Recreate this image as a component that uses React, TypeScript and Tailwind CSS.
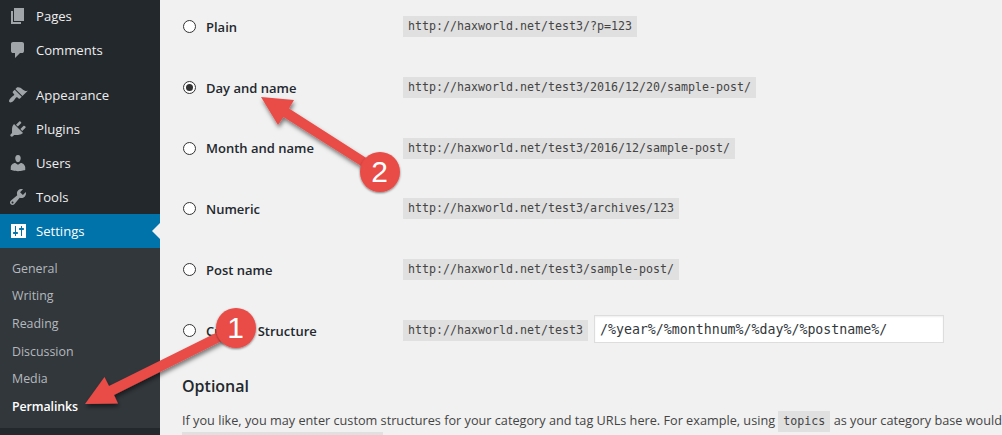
import { clsx } from "clsx";

const ICONS = {
  page: "M6 15V2h10v13H6zm-1 1h8v2H3V5h2v11z",
  comment:
    "M5 2h9q.82 0 1.41.59T16 4v7q0 .82-.59 1.41T14 13h-2l-5 5v-5H5q-.82 0-1.41-.59T3 11V4q0-.82.59-1.41T5 2z",
  brush:
    "M14.48 11.06L7.41 3.99l1.5-1.5c.5-.56 2.3-.47 3.51.32 1.21.8 1.43 1.28 2.91 2.1 1.18.64 2.45 1.26 4.45.85zm-.71.71L6.7 4.7 4.93 6.47c-.39.39-.39 1.02 0 1.41l1.06 1.06c.39.39.39 1.03 0 1.42-.6.6-1.43 1.11-2.21 1.69-.35.26-.7.53-1.01.84C1.43 14.23.4 16.08 1.4 17.07c.99 1 2.84-.03 4.18-1.36.31-.31.58-.66.85-1.02.57-.78 1.08-1.61 1.69-2.21.39-.39 1.02-.39 1.41 0l1.06 1.06c.39.39 1.02.39 1.41 0z",
  plug: "M13.11 4.36L9.87 7.6 8 5.73l3.24-3.24c.35-.34 1.05-.2 1.56.32.52.51.66 1.21.31 1.55zm-8 1.77l.91-1.12 9.01 9.01-1.19.84c-.71.71-2.63 1.16-3.82 1.16H6.14L4.9 17.26c-.59.59-1.54.59-2.12 0-.59-.58-.59-1.53 0-2.12l1.24-1.24v-3.88c0-1.13.4-3.19 1.09-3.89zm7.26 3.97l3.24-3.24c.34-.35 1.04-.21 1.55.31.52.51.66 1.21.31 1.55l-3.24 3.25z",
  user: "M10 9.25c-2.27 0-2.73-3.44-2.73-3.44C7 4.02 7.82 2 9.97 2c2.16 0 2.98 2.02 2.71 3.81 0 0-.41 3.44-2.68 3.44zm0 2.57L12.72 10c2.39 0 4.52 2.33 4.52 4.53v2.49s-3.65 1.13-7.24 1.13c-3.65 0-7.24-1.13-7.24-1.13v-2.49c0-2.25 1.94-4.48 4.47-4.48z",
  wrench:
    "M16.68 9.77c-1.34 1.34-3.3 1.67-4.95.99l-5.41 6.52c-.99.99-2.59.99-3.58 0s-.99-2.59 0-3.57l6.52-5.42c-.68-1.65-.35-3.61.99-4.95 1.28-1.28 3.12-1.62 4.72-1.06l-2.89 2.89 2.82 2.82 2.86-2.87c.53 1.58.18 3.39-1.08 4.65zM3.81 16.21c.4.39 1.04.39 1.43 0 .4-.4.4-1.04 0-1.43-.39-.4-1.03-.4-1.43 0-.39.39-.39 1.03 0 1.43z",
  sliders:
    "M18 17V3H3v14h15zM8 11h1.400q.6 0 .6 1t-.6 1H8v2H7v-2H5.600q-.6 0-.6-1t.6-1H7V5h1v6zm5-2h-1.400q-.6 0-.6-1t.6-1H13V5h1v2h1.400q.6 0 .6 1t-.6 1H14v6h-1V9z",
};

interface MenuItem {
  label: string;
  icon: keyof typeof ICONS;
  active?: boolean;
}

const CONTENT_MENU: MenuItem[] = [
  { label: "Pages", icon: "page" },
  { label: "Comments", icon: "comment" },
];

const ADMIN_MENU: MenuItem[] = [
  { label: "Appearance", icon: "brush" },
  { label: "Plugins", icon: "plug" },
  { label: "Users", icon: "user" },
  { label: "Tools", icon: "wrench" },
  { label: "Settings", icon: "sliders", active: true },
];

const SUBMENU = ["General", "Writing", "Reading", "Discussion", "Media", "Permalinks"];

const BASE = "http://haxworld.net/test3";

const OPTIONS = [
  { label: "Plain", url: `${BASE}/?p=123` },
  { label: "Day and name", url: `${BASE}/2016/12/20/sample-post/` },
  { label: "Month and name", url: `${BASE}/2016/12/sample-post/` },
  { label: "Numeric", url: `${BASE}/archives/123` },
  { label: "Post name", url: `${BASE}/sample-post/` },
  { label: "Custom Structure", url: BASE, custom: true },
];

function MenuRow({ label, icon, active }: MenuItem) {
  return (
    <a
      className={clsx(
        "flex h-[34px] items-center pl-2 text-[13.1px]",
        active ? "bg-[#0073aa] text-white" : "text-[#eee]",
      )}
    >
      <svg
        viewBox="0 0 20 20"
        className={clsx("size-5 shrink-0", active ? "fill-white" : "fill-[#a0a5aa]")}
      >
        <path d={ICONS[icon]} />
      </svg>
      <span className="ml-2 grow pt-0.5">{label}</span>
      {active && (
        <svg viewBox="0 0 8 16" className="h-4 w-2 fill-[#f1f1f1]">
          <path d="M8 0v16L0 8z" />
        </svg>
      )}
    </a>
  );
}

function Sidebar() {
  return (
    <nav className="h-full w-40 shrink-0 bg-[#23282d]">
      <div className="-mt-px">
        {CONTENT_MENU.map((item) => (
          <MenuRow key={item.label} {...item} />
        ))}
      </div>
      <div className="mt-[11px]">
        {ADMIN_MENU.map((item) => (
          <MenuRow key={item.label} {...item} />
        ))}
      </div>
      <ul className="h-[180px] bg-[#32373c] pt-[7px] pl-3 text-[12.4px] text-[#b4b9be]">
        {SUBMENU.map((label) => (
          <li
            key={label}
            className="flex h-[27.7px] items-center last:font-semibold last:tracking-[-0.1px] last:text-white"
          >
            {label}
          </li>
        ))}
      </ul>
    </nav>
  );
}

function Code({ children }: { children: string }) {
  return (
    <code className="inline-block h-[21px] bg-[#e0e0e0] px-[5px] font-['DejaVu_Sans_Mono',monospace] text-[11.63px] leading-[21px] text-[#444]">
      {children}
    </code>
  );
}

function Radio({ checked }: { checked: boolean }) {
  return (
    <span className="flex size-[13px] items-center justify-center rounded-full border border-[#333] bg-white">
      {checked && <span className="size-[7px] rounded-full bg-[#333]" />}
    </span>
  );
}

function Annotations() {
  return (
    <svg
      viewBox="0 0 1002 435"
      className="pointer-events-none absolute inset-0 h-[435px] w-[1002px] fill-[#e94b47]"
    >
      <defs>
        <filter id="shadow" x="-20%" y="-20%" width="140%" height="150%">
          <feDropShadow dx="1" dy="3" stdDeviation="2" floodOpacity="0.5" />
        </filter>
        <filter id="badge-shadow" x="-20%" y="-20%" width="140%" height="150%">
          <feDropShadow dx="0" dy="1" stdDeviation="1" floodOpacity="0.5" />
        </filter>
      </defs>
      <path
        filter="url(#shadow)"
        d="M85 404l19.500-27 4.500 9L234 324l4 9L114 395l4 8.500z"
      />
      <path
        filter="url(#shadow)"
        d="M261 97l33 3-5 8.500L382 168l-5 8L283.500 117l-5.500 8z"
      />
      <g filter="url(#badge-shadow)">
        <circle cx="236" cy="328" r="20" />
        <circle cx="380" cy="172" r="20" />
      </g>
      <g
        className="fill-white font-['Liberation_Sans',sans-serif] text-[30px]"
        textAnchor="middle"
      >
        <text x="235.500" y="338">1</text>
        <text x="379.500" y="182">2</text>
      </g>
    </svg>
  );
}

export default function App() {
  return (
    <div className="relative flex h-[435px] w-[1002px] overflow-hidden bg-[#f1f1f1] font-['Open_Sans',sans-serif] text-[#444]">
      <Sidebar />
      <main className="min-w-0 grow pl-[22px]">
        <div className="-mt-[3.5px]">
          {OPTIONS.map(({ label, url, custom }) => (
            <div key={label} className="flex h-[60.7px] items-center">
              <label className="flex w-[221px] items-center gap-2.5 pl-px text-[13px] font-semibold text-[#23282d]">
                <Radio checked={label === "Day and name"} />
                <span className="pt-0.5">{label}</span>
              </label>
              <Code>{url}</Code>
              {custom && (
                <input
                  readOnly
                  value="/%year%/%monthnum%/%day%/%postname%/"
                  className="mb-0.5 ml-1.5 h-7 w-[350px] border border-[#ddd] bg-white px-[5px] font-['DejaVu_Sans_Mono',monospace] text-[13.25px] text-[#32373c] shadow-[inset_0_1px_2px_rgba(0,0,0,0.07)] outline-none"
                />
              )}
            </div>
          ))}
        </div>
        <h2 className="mt-[13.5px] text-[16px] leading-6 font-semibold text-[#23282d]">
          Optional
        </h2>
        <p className="mt-3 text-[12.7px] leading-[21px] whitespace-nowrap">
          If you like, you may enter custom structures for your category and tag URLs here. For
          example, using <Code>topics</Code> as your category base would
        </p>
        <div className="h-5 w-[201px] bg-[#e0e0e0]" />
      </main>
      <Annotations />
    </div>
  );
}
